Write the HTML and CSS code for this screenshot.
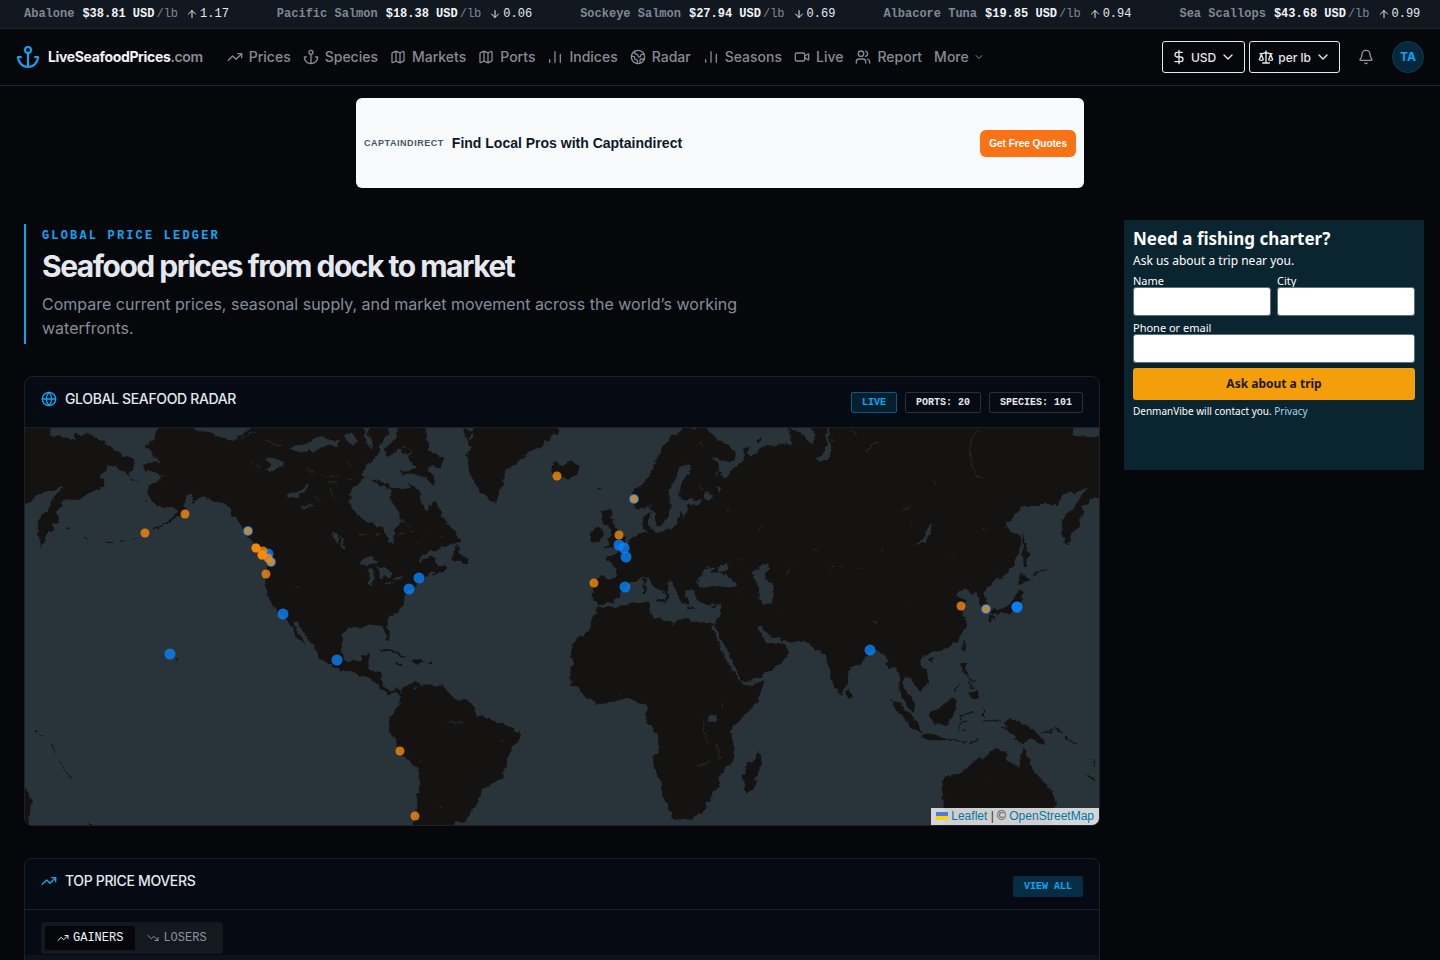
FILE: index.html
```html
<!DOCTYPE html>
<html lang="en">
<head>
<meta charset="utf-8">
<meta name="viewport" content="width=device-width, initial-scale=1">
<title>LiveSeafoodPrices.com</title>
<link rel="stylesheet" href="styles.css">
</head>
<body>
<svg class="sprite" aria-hidden="true">
  <symbol id="i-up" viewBox="0 0 24 24"><path d="m5 12 7-7 7 7M12 19V5"/></symbol>
  <symbol id="i-down" viewBox="0 0 24 24"><path d="M12 5v14M19 12l-7 7-7-7"/></symbol>
  <symbol id="i-anchor" viewBox="0 0 24 24"><path d="M12 22V8M5 12H2a10 10 0 0 0 20 0h-3"/><circle cx="12" cy="5" r="3"/></symbol>
  <symbol id="i-trend" viewBox="0 0 24 24"><path d="m22 7-8.500 8.500-5-5L2 17"/><path d="M16 7h6v6"/></symbol>
  <symbol id="i-trend-down" viewBox="0 0 24 24"><path d="m22 17-8.500-8.500-5 5L2 7"/><path d="M16 17h6v-6"/></symbol>
  <symbol id="i-map" viewBox="0 0 24 24"><path d="M14.106 5.553a2 2 0 0 0 1.788 0l3.659-1.830A1 1 0 0 1 21 4.619v12.764a1 1 0 0 1-.553.894l-4.553 2.277a2 2 0 0 1-1.788 0l-4.212-2.106a2 2 0 0 0-1.788 0l-3.659 1.830A1 1 0 0 1 3 19.381V6.618a1 1 0 0 1 .553-.894l4.553-2.277a2 2 0 0 1 1.788 0zM15 5.764v15M9 3.236v15"/></symbol>
  <symbol id="i-bars" viewBox="0 0 24 24"><path d="M12 20V4M20 20V8M4 20v-4"/></symbol>
  <symbol id="i-earth" viewBox="0 0 24 24"><path d="M21.540 15H17a2 2 0 0 0-2 2v4.540M7 3.340V5a3 3 0 0 0 3 3 2 2 0 0 1 2 2c0 1.100.9 2 2 2a2 2 0 0 0 2-2c0-1.100.9-2 2-2h3.170M11 21.950V18a2 2 0 0 0-2-2 2 2 0 0 1-2-2v-1a2 2 0 0 0-2-2H2.050"/><circle cx="12" cy="12" r="10"/></symbol>
  <symbol id="i-video" viewBox="0 0 24 24"><path d="m16 13 5.223 3.482a.5.5 0 0 0 .777-.416V7.870a.5.5 0 0 0-.752-.432L16 10.500"/><rect x="2" y="6" width="14" height="12" rx="2"/></symbol>
  <symbol id="i-users" viewBox="0 0 24 24"><path d="M16 21v-2a4 4 0 0 0-4-4H6a4 4 0 0 0-4 4v2"/><circle cx="9" cy="7" r="4"/><path d="M22 21v-2a4 4 0 0 0-3-3.870M16 3.130a4 4 0 0 1 0 7.750"/></symbol>
  <symbol id="i-chevron" viewBox="0 0 24 24"><path d="m6 9 6 6 6-6"/></symbol>
  <symbol id="i-dollar" viewBox="0 0 24 24"><path d="M12 2v20M17 5H9.500a3.500 3.500 0 0 0 0 7h5a3.500 3.500 0 0 1 0 7H6"/></symbol>
  <symbol id="i-scale" viewBox="0 0 24 24"><path d="m16 16 3-8 3 8c-.87.65-1.920 1-3 1s-2.130-.35-3-1ZM2 16l3-8 3 8c-.87.65-1.920 1-3 1s-2.130-.35-3-1ZM7 21h10M12 3v18M3 7h2c2 0 5-1 7-2 2 1 5 2 7 2h2"/></symbol>
  <symbol id="i-bell" viewBox="0 0 24 24"><path d="M10.268 21a2 2 0 0 0 3.464 0M3.262 15.326A1 1 0 0 0 4 17h16a1 1 0 0 0 .740-1.673C19.410 13.956 18 12.499 18 8A6 6 0 0 0 6 8c0 4.499-1.411 5.956-2.738 7.326"/></symbol>
  <symbol id="i-globe" viewBox="0 0 24 24"><circle cx="12" cy="12" r="10"/><path d="M12 2a14.500 14.500 0 0 0 0 20 14.500 14.500 0 0 0 0-20M2 12h20"/></symbol>
</svg>

<div class="ticker">
  <div class="tick"><span class="tick-name">Abalone</span><span class="tick-price"><b>$38.81 USD</b><span>/lb</span></span><span class="tick-change"><svg class="icon s12"><use href="#i-up"/></svg>1.17</span></div>
  <div class="tick"><span class="tick-name">Pacific Salmon</span><span class="tick-price"><b>$18.38 USD</b><span>/lb</span></span><span class="tick-change"><svg class="icon s12"><use href="#i-down"/></svg>0.06</span></div>
  <div class="tick"><span class="tick-name">Sockeye Salmon</span><span class="tick-price"><b>$27.94 USD</b><span>/lb</span></span><span class="tick-change"><svg class="icon s12"><use href="#i-down"/></svg>0.69</span></div>
  <div class="tick"><span class="tick-name">Albacore Tuna</span><span class="tick-price"><b>$19.85 USD</b><span>/lb</span></span><span class="tick-change"><svg class="icon s12"><use href="#i-up"/></svg>0.94</span></div>
  <div class="tick"><span class="tick-name">Sea Scallops</span><span class="tick-price"><b>$43.68 USD</b><span>/lb</span></span><span class="tick-change"><svg class="icon s12"><use href="#i-up"/></svg>0.99</span></div>
</div>

<header class="topbar">
  <a class="brand" href="#"><svg class="icon s24 accent"><use href="#i-anchor"/></svg><span>LiveSeafoodPrices<span class="brand-tld">.com</span></span></a>
  <nav class="nav">
    <a href="#"><svg class="icon s16"><use href="#i-trend"/></svg>Prices</a>
    <a href="#"><svg class="icon s16"><use href="#i-anchor"/></svg>Species</a>
    <a href="#"><svg class="icon s16"><use href="#i-map"/></svg>Markets</a>
    <a href="#"><svg class="icon s16"><use href="#i-map"/></svg>Ports</a>
    <a href="#"><svg class="icon s16"><use href="#i-bars"/></svg>Indices</a>
    <a href="#"><svg class="icon s16"><use href="#i-earth"/></svg>Radar</a>
    <a href="#"><svg class="icon s16"><use href="#i-bars"/></svg>Seasons</a>
    <a href="#"><svg class="icon s16"><use href="#i-video"/></svg>Live</a>
    <a href="#"><svg class="icon s16"><use href="#i-users"/></svg>Report</a>
    <button type="button" class="nav-more">More<svg class="icon s12"><use href="#i-chevron"/></svg></button>
  </nav>
  <div class="tools">
    <label class="picker"><svg class="icon s16"><use href="#i-dollar"/></svg><select aria-label="Currency"><option>USD</option></select><svg class="icon s16"><use href="#i-chevron"/></svg></label>
    <label class="picker"><svg class="icon s16"><use href="#i-scale"/></svg><select aria-label="Unit"><option>per lb</option></select><svg class="icon s16"><use href="#i-chevron"/></svg></label>
    <button type="button" class="bell" aria-label="Notifications"><svg class="icon s16"><use href="#i-bell"/></svg></button>
    <button type="button" class="avatar">TA</button>
  </div>
</header>

<div class="banner-wrap">
  <section class="banner">
    <span class="banner-brand">CAPTAINDIRECT</span>
    <strong class="banner-title">Find Local Pros with Captaindirect</strong>
    <button type="button" class="banner-cta">Get Free Quotes</button>
  </section>
</div>

<div class="layout">
  <main class="content">
    <section class="hero">
      <p class="eyebrow">GLOBAL PRICE LEDGER</p>
      <h1>Seafood prices from dock to market</h1>
      <p class="lead">Compare current prices, seasonal supply, and market movement across the world’s working waterfronts.</p>
    </section>

    <section class="card">
      <div class="card-head radar-head">
        <h2><svg class="icon s16 accent"><use href="#i-globe"/></svg>GLOBAL SEAFOOD RADAR</h2>
        <div class="badges"><span class="badge live">LIVE</span><span class="badge">PORTS: 20</span><span class="badge">SPECIES: 101</span></div>
      </div>
      <div class="map">
        <svg class="map-svg" viewBox="25 428 1074 397" preserveAspectRatio="xMidYMid slice" role="img" aria-label="World map of ports">
          <defs><filter id="coast" x="0" y="0" width="1" height="1" color-interpolation-filters="sRGB"><feTurbulence type="fractalNoise" baseFrequency="0.16" numOctaves="3" seed="4" result="n"/><feDisplacementMap in="SourceGraphic" in2="n" scale="6" xChannelSelector="R" yChannelSelector="G"/></filter></defs>
          <g filter="url(#coast)">
            <rect class="sea" x="0" y="400" width="1130" height="450"/>
            <g transform="translate(20 425) scale(.33333)">
              <path class="land" d="M-30-30H92L90 32 120 36 165 42 162 28 180 26 215 30 255 55 300 85 310 95 330 98 345 112 340 130 325 150 300 135 275 118 262 118 262 140 250 145 238 150 258 180 235 190 205 205 180 222 165 225 140 222 120 232 130 240 118 250 108 265 115 285 100 300 102 315 85 320 80 335 72 350 65 364 58 340 52 315 55 290 65 272 85 255 95 235 110 205 128 190 130 182 115 188 100 198 80 198 60 205 50 215 35 235 12 240-30 245Z"/>
              <path class="land" d="M420 9 405 25 400 45 380 60 390 75 400 95 415 95 425 110 405 108 385 115 368 125 380 138 405 145 425 150 422 165 400 175 385 185 382 205 390 222 398 232 415 245 435 248 450 245 470 248 475 258 462 270 445 285 430 297 412 305 395 312 398 318 420 308 440 296 460 284 480 268 495 255 490 245 500 215 515 208 520 222 505 238 530 225 545 212 560 222 590 230 610 235 630 255 645 275 660 295 675 320 690 345 705 360 725 370 745 395 742 420 738 450 735 480 742 510 755 535 775 560 795 580 810 600 825 625 840 645 860 670 850 650 835 625 822 600 820 590 830 592 850 620 870 650 890 675 895 695 915 710 940 722 966 735V-30H430Z"/>
              <path class="sea" d="M500-30 525 14 570 22 600 35 640 52 655 35 690 12 705-30ZM805 68 840 62 870 52 890 38 905 33 930 45 975 50 985 62 960 72 930 62 900 68 880 80 850 76 820 78ZM735 102 760 95 795 110 785 122 760 138 740 135 754 118ZM800 208 830 200 850 185 872 178 860 194 835 212 805 216ZM838 250 870 238 882 242 850 254ZM935 322 950 325 962 345 972 370 962 374 948 350Z"/>
              <path class="land" d="M330 162 345 164 355 170 340 168ZM370 226 382 224 380 231ZM466 698 476 702 470 708Z"/>
              <path class="streams" d="M655 48 690 22 705 25M735 40 760 58 785 62M860 130 880 138 875 150M925 170 965 172 960 200M930 190 940 215 950 225M905 152 990 156M880 210 900 230M980 60 1000 80M1000 15 1050 60M1020 40 1060 70M940 45 955 60M690 110 720 130M830 485 842 488M945 345 935 330"/>
              <path class="isles" d="M285 352 260 352M315 347 300 350M340 343 350 340M190 340 205 345M140 305 146 312M645 270 668 300 685 335"/>
            </g>
            <g transform="translate(340 425) scale(.33333)">
              <path class="land" d="M-6-30H245L262 50 265 75 312 100 300 130 278 120 262 130 285 160 280 180 250 158 215 145 175 150 170 165 205 172 240 195 245 240 262 255 285 225 295 245 305 270 320 295 340 310 355 330 360 350 345 355 320 362 290 375 265 378 245 400 235 415 252 405 275 392 287 395 285 410 295 422 322 425 320 435 300 440 275 455 285 440 268 440 255 455 245 470 225 485 205 500 190 515 188 545 165 570 145 585 142 605 150 630 152 648 142 645 132 620 125 602 100 600 75 602 65 612 45 605 20 612 6 630 4 665 12 700 25 712 48 710 60 705 65 690 92 685 92 695 82 715 85 735 118 738 125 745 125 782 95 765 60 750 30 738-6 735Z"/>
              <path class="sea" d="M30 200 60 168 80 155 100 170 120 180 150 190 150 220 165 240 180 270 178 300 165 310 160 335 162 360 148 350 138 330 130 305 100 298 70 285 45 260 28 235ZM175 10 155-20 140 30 125 55 110 90 90 110 60 150 85 160 130 172 160 192 215 190 190 160 180 137 215 135 228 125 200 98 218 78 195 60 175 70 160 90 140 95 130 75 150 60 165 40ZM65-10 88-10 82 30 98 50 92 80 80 50ZM10 28 40 30 55 50 35 60 20 45ZM55 415 75 400 100 395 115 410 115 422 90 415 70 422ZM88 430 100 430 102 455 98 480 88 478ZM110 425 140 430 155 445 150 460 135 450 125 460 115 450 120 435ZM128 478 150 470 162 470 135 484ZM158 462 185 455 183 463 165 468ZM0 325 8 345 14 372 6 370Z"/>
              <path class="land" d="M180 66 200 64 215 82 200 90 182 84ZM122 174 132 178 128 186 120 182ZM370 14 395 16 400 35 385 44 372 34ZM395-30 400 15 385 45 384 60 395 70 380 90 385 120 392 150 405 175 420 200 440 215 465 232 474 210 485 180 490 160 500 130 520 120 545 100 570 80 600 65 625 45 655 18 640-30ZM632 130 640 118 636 110 650 108 655 122 675 115 685 108 700 112 718 125 715 145 700 155 680 168 665 155 640 148ZM350 360 345 375 335 400 335 408 360 410 385 415 382 400 365 390 350 385 358 365ZM780 260 800 248 820 258 808 275 820 285 822 305 845 325 862 335 858 352 830 362 790 372 805 360 800 345 815 335 810 310 795 300 790 285ZM755 320 775 305 790 312 785 345 765 355 750 350ZM772 188 780 190 778 196ZM755 466 780 456 830 462 828 435 820 420 798 405 800 396 830 400 850 390 870 360 900 330 935 320 985 316V500L945 490 930 465 915 450 895 468 870 470 840 500 835 510 820 530 785 538 760 530 758 490ZM790 547 850 545 900 535 930 533 930 548 928 565 940 578 990 590V784H695L692 740 700 720 692 690 700 655 720 635 745 620 755 600 755 575 780 560ZM909 462 917 455 917 474 910 476ZM908 484 920 482 918 506 910 506Z"/>
              <path class="streams" d="M175 330 195 322M205 325 225 320M200 300 215 305M230 355 240 350M255 322 262 330M300 335 310 340M100 335 120 325M60 330 80 328M180 285 195 290M20 110 40 130M15 160 45 165"/>
            </g>
            <g transform="translate(600 425) scale(.33333)">
              <path class="land" d="M-12 458 48 460 50 430 30 410 20 400 50 385 65 365 85 355 95 340 115 328 140 322 128 300 128 280 142 268 152 262 148 240 130 250 115 258 100 240 92 225 105 195 130 175 155 140 170 100 185 65 215 30 260 10 320 12 350 45 385 60 408 85 405 105 385 112 350 100 335 95 355 115 358 140 375 158 388 145 400 125 425 110 435 90 430 65 445 65 450 95 470 80 490 65 530 60 560 55 578 60 570 40 560 8 600 20 640 65 645 40 625-30H790V712L742 735V784H705L690 745 680 690 670 690 650 670 635 652 545 648 540 635 520 640 500 630 485 602 470 605 490 640 500 655 525 658 535 650 568 680 550 710 480 755 430 775 405 725 345 605 350 590 360 560 362 538 345 540 310 535 290 525 285 500 275 490 250 495 262 515 268 542 248 535 235 515 225 490 215 475 190 455 175 432 162 440 165 455 185 480 205 505 208 518 195 530 200 512 185 500 160 480 148 460 130 455 110 468 90 475 60 500 58 512 40 530-12 538Z"/>
              <path class="land" d="M-10 547 60 545 100 535 140 533 150 545 148 565 165 580 200 585 220 600 235 585 260 580 290 590 325 595 350 590 338 605 345 640 365 680 385 720 410 760 422 784H-10ZM165 525 195 522 190 535 178 532ZM262 546 282 550 278 554 262 551ZM335 548 350 542 348 550 338 554ZM128 462 137 455 137 474 130 476ZM128 484 140 482 138 506 130 506ZM470 42 482 38 484 48 472 52Z"/>
              <path class="sea" d="M240 125 262 118 272 130 262 150 245 175 238 205 245 225 275 225 308 223 300 237 262 240 264 260 250 275 240 255 235 290 215 312 190 318 165 322 150 312 142 290 155 262 150 240 165 268 165 290 172 302 190 298 205 270 212 240 205 215 208 190 225 165ZM315 202 330 202 336 218 325 228 315 220ZM352 180 362 185 362 208 352 200ZM378 248 388 255 384 262ZM295 470 310 440 325 422 340 430 335 440 355 440 385 455 410 475 405 488 370 485 340 480 310 490 295 485ZM352 432 370 422 392 416 382 432 365 440ZM460 440 480 425 505 418 508 435 490 445 505 470 522 490 515 535 495 538 475 520 480 500 468 475ZM678-20 692-20 686 20 688 45 695 70 685 98 665 110 643 100 665 95 678 75 680 45Z"/>
              <path class="streams" d="M695 45 712 45 720 65 718 80M470 320 480 305 490 300M555 450 565 430 578 425M690 438 695 425 730 422M750 425 765 435M705 470 722 472M640 375 648 372M415 405 428 402M420 515 424 518M530 555 538 558M300 50 305 70M295 180 310 195M350 130 348 160M330 675 342 668"/>
            </g>
            <g transform="translate(340 640) scale(.33333)">
              <path class="land" d="M-6 90 20 88 45 92 70 105 95 118 105 130 120 145 145 163 165 157 178 167 186 156 175 147 155 150 140 150 125 135 122 115 125 95 118 92 85 92 82 70 92 42 68 45 60 60 25 68-6 60ZM178 165 190 140 215 128 225 124 240 135 280 138 315 140 325 155 345 178 380 180 400 195 410 225 440 235 480 250 515 262 540 280 535 305 510 335 500 370 490 410 460 430 425 450 418 480 395 515 375 545 340 542 350 580H215L228 530 232 480 240 420 235 385 200 360 180 340 165 300 145 268 150 235 175 200 180 180Z"/>
              <path class="land" d="M115 35 135 25 165 32 198 50 180 50 150 35ZM212 60 230 54 254 66 230 74ZM168 69H186V73H168ZM262 67H276V72H262ZM712-6 692 40 700 65 692 100 697 125 720 150 735 170 770 190 820 185 850 175 880 178 890 190 915 190 920 205 915 235 935 265 955 295 955 325 940 350 940 380 960 420 968 465 985 500 1000 540 1060 535 1085 515 1110 480 1118 455 1140 440 1138 405 1150 390 1180 370 1182 345 1180 310 1170 275 1190 250 1225 215 1255 180 1274 122 1240 132 1210 138 1205 130 1185 100 1165 70 1145 30 1130-6ZM1150-6 1170 30 1190 70 1210 118 1240 110 1290 90 1330 65 1348 35 1330 15 1312 5 1300 15 1280 10 1272-6ZM1350-6 1405 5 1430 30 1458 38 1460 70 1480 130 1502 166 1520 130V-6ZM1258 333 1268 360 1258 385 1240 450 1215 454 1208 415 1218 370 1240 362Z"/>
              <path class="sea" d="M1108 226 1130 223 1126 245 1108 250ZM224 140 230 140 230 150 224 148Z"/>
              <path class="streams" d="M1088 240 1090 278 1110 308M1130 310 1140 358M1072 378 1110 365M1146 190 1150 205M835 155 840 165M240 362 248 366M298 500 306 502M325 245 365 250M480 305 490 302"/>
            </g>
            <g transform="translate(840 380) scale(.33333)">
              <path class="land" d="M-10 100H702V168L730 170 770 172 820 165V340L778 352 750 355 745 370 725 380 730 400 718 420 720 440 700 455 690 480 678 498 668 470 665 425 675 405 700 385 725 345 742 320 730 325 705 345 690 335 665 350 655 378 630 370 600 378 550 378 530 400 495 440 510 455 535 462 545 480 535 520 510 570 475 600 460 605 430 635 440 660 452 685 440 692 425 690 420 665 410 640 395 640 375 628 345 650 365 655 380 660 365 690 375 715 378 740 360 775 335 800 300 812 270 820 245 830 240 850 265 880 268 905 240 932 230 925 215 900 195 890 190 915 205 945 222 965 222 997 205 985 190 955 178 925 180 900 175 880 165 860 148 868 140 840 120 815 105 810 85 825 60 840 22 870 20 910-2 940-20 900Z"/>
              <path class="land" d="M548 455 555 490 568 525 560 540 565 555 552 560 548 520ZM545 575 560 590 575 598 555 608 535 612ZM535 625 548 635 545 660 530 690 505 700 475 700 450 700 460 690 495 685 520 660 530 640ZM450 703 463 710 456 727 448 720ZM370 788 378 784 371 812 363 806ZM264 838 283 831 276 849ZM22 925 36 945 25 957 17 945ZM150 960 175 968 205 1000 235 1030 242 1056 215 1045 190 1015 165 985ZM240 1060 280 1066 322 1076 318 1084 270 1080 245 1073ZM270 995 295 985 320 965 340 948 350 965 345 990 325 1030 320 1040 285 1030 272 1015ZM363 850 380 848 376 872 388 888 370 886ZM384 940 410 933 416 955 395 956ZM480 1035 500 1045 495 1024 515 1018 570 1040 595 1060 622 1098 600 1092 575 1075 550 1090 520 1080 530 1070 510 1050 490 1047ZM320 1400 308 1235 305 1205 330 1185 360 1178 385 1160 400 1145 420 1130 435 1135 450 1110 475 1108 500 1115 500 1135 520 1155 538 1160 545 1120 552 1098 565 1140 585 1175 610 1205 635 1235 648 1270 640 1310 620 1400ZM736 1185 752 1190 764 1204 750 1198Z"/>
              <path class="isles" d="M362 1005 400 998M362 1012 360 1050M365 1030 382 1022M368 1045 378 1052M322 1080 360 1082M368 1086 385 1082M392 1092 418 1076M430 985V1010M430 1022H470M450 1018 480 1024M340 938 362 910M380 892 405 905M388 905 398 920M390 918 405 925M605 1058 630 1056 638 1044M645 1045 665 1060M675 1070 712 1095M760 1140 768 1160M580 585 618 568M470 705 480 698"/>
              <path class="sea" d="M225 492 250 478 268 435 275 432 272 455 255 485 235 495Z"/>
              <path class="streams" d="M415 150 395 175 388 210 392 250 405 280 430 298M280 300 295 315M185 390 212 385M425 452 440 450M465 575 468 580M125 510 130 512M0 560 10 558M50 568 65 565M190 668 195 672M95 720 112 732M80 215 95 195 115 185M35 150 50 165M435 1205 440 1206M335 525 340 530M208 428 212 440"/>
            </g>
            <path class="land" d="M827 645 835 683 839 695 845 684 847 670 865 655 862 640ZM20 785 27 788 32 802 29 812 28 824 20 830Z"/>
            <path class="dots" d="M36 731 42 737M50 744 56 752M60 762 72 780M102 766 104 768M88 821 92 825M776 777 777 778"/>
          </g>
          <g class="ports-blue">
            <circle cx="268" cy="554" r="5.500"/><circle cx="283" cy="614" r="5.500"/><circle cx="170" cy="654" r="5.500"/><circle cx="337" cy="660" r="5.500"/><circle cx="419" cy="578" r="5.500"/><circle cx="409" cy="589" r="5.500"/><circle cx="248" cy="531" r="5"/><circle cx="271" cy="562" r="5"/><circle cx="634" cy="499" r="5"/><circle cx="619" cy="545" r="5.500"/><circle cx="624" cy="548" r="5.500"/><circle cx="626" cy="557" r="5.500"/><circle cx="625" cy="587" r="5.500"/><circle cx="870" cy="650" r="5.500"/><circle cx="986" cy="609" r="5"/><circle cx="1017" cy="607" r="5.500"/><circle cx="1017" cy="607" r="5.500"/>
          </g>
          <g class="ports-orange">
            <circle cx="145" cy="533" r="4.500"/><circle cx="185" cy="514" r="4.500"/><circle cx="256" cy="548" r="4.500"/><circle cx="256" cy="548" r="4.500"/><circle cx="263" cy="551" r="4.500"/><circle cx="262" cy="555" r="4.500"/><circle cx="262" cy="555" r="4.500"/><circle cx="268" cy="558" r="4.500"/><circle cx="266" cy="574" r="4.500"/><circle cx="557" cy="476" r="4.500"/><circle cx="619" cy="535" r="4.500"/><circle cx="594" cy="583" r="4.500"/><circle cx="400" cy="751" r="4.500"/><circle cx="415" cy="816" r="4.500"/><circle cx="961" cy="606" r="4.500"/>
          </g>
          <g class="ports-both"><circle cx="248" cy="531" r="4"/><circle cx="271" cy="562" r="4"/><circle cx="634" cy="499" r="4"/><circle cx="986" cy="609" r="4"/></g>
        </svg>
        <div class="attribution"><a href="#"><svg class="flag" viewBox="0 0 12 8" aria-hidden="true"><path fill="#4c7be1" d="M0 0h12v4H0z"/><path fill="#ffd500" d="M0 4h12v4H0z"/></svg> Leaflet</a> | © <a href="#">OpenStreetMap</a></div>
      </div>
    </section>

    <section class="card">
      <div class="card-head">
        <h2><svg class="icon s16 accent"><use href="#i-trend"/></svg>TOP PRICE MOVERS</h2>
        <a class="view-all" href="#">VIEW ALL</a>
      </div>
      <div class="tabs-row">
        <div class="tabs" role="tablist">
          <button type="button" role="tab" aria-selected="true" class="tab active"><svg class="icon s12"><use href="#i-trend"/></svg>GAINERS</button>
          <button type="button" role="tab" aria-selected="false" class="tab"><svg class="icon s12"><use href="#i-trend-down"/></svg>LOSERS</button>
        </div>
      </div>
      <div class="movers-head"></div>
    </section>
  </main>

  <aside class="charter">
    <h2>Need a fishing charter?</h2>
    <p class="charter-sub">Ask us about a trip near you.</p>
    <form class="charter-form">
      <label>Name<input type="text" name="name"></label>
      <label>City<input type="text" name="city"></label>
      <label class="wide">Phone or email<input type="text" name="contact"></label>
      <button type="button" class="wide">Ask about a trip</button>
    </form>
    <p class="charter-note">DenmanVibe will contact you. <a href="#">Privacy</a></p>
  </aside>
</div>
</body>
</html>
```

FILE: styles.css
```css
:root {
  --bg: #05070b;
  --card: #060a12;
  --line: #1b212b;
  --text: #e5e8ee;
  --muted: #868c9a;
  --accent: #0ea5f5;
  --sans: Inter, "Liberation Sans", sans-serif;
  --mono: "Liberation Mono", monospace;
}
* { box-sizing: border-box; }
body {
  margin: 0;
  height: 100vh;
  overflow: hidden;
  background: var(--bg);
  color: var(--text);
  font-family: var(--sans);
}
h1, h2, p { margin: 0; }
a { color: inherit; text-decoration: none; }
button, select, input { font: inherit; color: inherit; }
button { border: 0; background: none; padding: 0; cursor: pointer; }
.sprite { display: none; }
.icon {
  flex: none;
  fill: none;
  stroke: currentColor;
  stroke-width: 2;
  stroke-linecap: round;
  stroke-linejoin: round;
}
.s12 { width: 12px; height: 12px; }
.s16 { width: 16px; height: 16px; }
.s24 { width: 24px; height: 24px; }
.accent { color: var(--accent); }

.ticker {
  display: flex;
  gap: 48px;
  height: 29px;
  align-items: center;
  padding-left: 24px;
  overflow: hidden;
  background: #111820;
  border-bottom: 1px solid #202630;
  font: 12px/18px var(--mono);
  white-space: nowrap;
}
.tick { display: flex; gap: 8px; flex: none; }
.tick-name { color: #7f8793; font-weight: 700; }
.tick-price { display: flex; gap: 2px; }
.tick-price b { color: #f1f3f6; }
.tick-price span { color: #7f8793; }
.tick-change { display: flex; align-items: center; gap: 2px; }

.topbar {
  display: flex;
  align-items: center;
  height: 57px;
  padding: 0 16px;
  border-bottom: 1px solid #202630;
}
.brand {
  display: flex;
  align-items: center;
  gap: 8px;
  font-size: 14px;
  line-height: 20px;
  font-weight: 700;
  letter-spacing: -0.025em;
  color: #f1f3f6;
}
.brand-tld { color: #858d9b; font-weight: 600; }
.nav {
  display: flex;
  align-items: center;
  gap: 12px;
  margin-left: 24px;
  color: #858b96;
  font-size: 14px;
  line-height: 20px;
  font-weight: 500;
}
.nav a { display: flex; align-items: center; gap: 6px; }
.nav-more { display: flex; align-items: center; gap: 4px; }
.tools { display: flex; align-items: center; margin-left: auto; }
.picker {
  display: flex;
  align-items: center;
  gap: 4px;
  height: 32px;
  margin-right: 4px;
  padding: 0 8px;
  border: 1px solid #e5e8ee;
  border-radius: 3px;
  font-size: 12px;
  font-weight: 500;
}
.picker select {
  appearance: none;
  field-sizing: content;
  border: 0;
  background: transparent;
  padding: 0;
}
.bell { display: grid; place-items: center; width: 32px; height: 32px; margin: 0 10px 0 6px; color: #9299a5; }
.avatar {
  width: 32px;
  height: 32px;
  border-radius: 50%;
  background: #06283b;
  border: 1px solid #0a3c58;
  color: var(--accent);
  font-size: 12px;
  line-height: 16px;
  font-weight: 700;
}

.banner-wrap { display: flex; justify-content: center; padding: 12px 16px; }
.banner {
  display: flex;
  align-items: center;
  gap: 8px;
  width: 728px;
  max-width: 100%;
  height: 90px;
  padding: 0 8px;
  border-radius: 6px;
  background: #f8fafc;
  font-family: "Liberation Sans", sans-serif;
}
.banner-brand { color: #475569; font-size: 9px; line-height: 12px; font-weight: 700; letter-spacing: 0.06em; }
.banner-title { color: #0f172a; font-size: 14px; line-height: 18px; }
.banner-cta {
  margin-left: auto;
  padding: 7px 9px;
  border-radius: 6px;
  background: #f97316;
  color: #fff;
  font-size: 10px;
  line-height: 13px;
  font-weight: 700;
}

.layout {
  display: grid;
  grid-template-columns: minmax(0, 1fr) 300px;
  align-items: start;
  gap: 24px;
  padding: 20px 16px 0 24px;
}
.content { display: grid; gap: 32px; padding-top: 4px; }
.hero { padding: 4px 0 4px 16px; border-left: 2px solid var(--accent); }
.eyebrow { color: var(--accent); font: 700 12px/16px var(--mono); letter-spacing: 0.18em; }
h1 { margin: 4px 0 8px; font-size: 30px; line-height: 36px; font-weight: 700; letter-spacing: -0.05em; }
.lead { max-width: 720px; color: var(--muted); font-size: 16px; line-height: 24px; }

.card { border: 1px solid var(--line); border-radius: 8px; background: var(--card); overflow: hidden; }
.card-head {
  display: flex;
  justify-content: space-between;
  align-items: flex-start;
  height: 51px;
  padding: 12px 16px;
  border-bottom: 1px solid var(--line);
}
.card-head h2 {
  display: flex;
  align-items: center;
  gap: 8px;
  font-size: 14px;
  line-height: 20px;
  font-weight: 500;
  letter-spacing: -0.025em;
}
.badges { display: flex; gap: 8px; padding-top: 3px; font: 700 10px/15px var(--mono); }
.badge { padding: 2px 10px; border: 1px solid #29303a; border-radius: 2px; }
.live { color: var(--accent); background: #04202f; border-color: #075a85; }
.view-all {
  margin-top: 5px;
  padding: 3px 11px;
  border-radius: 2px;
  background: #062d42;
  color: var(--accent);
  font: 700 10px/15px var(--mono);
}

.map { position: relative; height: 397px; background: #28343a; }
.map-svg { display: block; width: 100%; height: 100%; }
.sea { fill: #28343a; }
.land { fill: #151311; }
.streams { fill: none; stroke: #28343a; stroke-width: 3; stroke-opacity: .75; }
.isles { fill: none; stroke: #151311; stroke-width: 4; }
.dots { fill: none; stroke: #151311; stroke-width: 1; }
.ports-blue circle { fill: #0a84ff; fill-opacity: .78; }
.ports-orange circle { fill: #ff8c0a; fill-opacity: .78; }
.ports-both circle { fill: #d89035; fill-opacity: .85; }
.attribution {
  position: absolute;
  right: 0;
  bottom: 0;
  padding: 0 5px;
  background: rgba(255, 255, 255, .8);
  color: #333;
  font: 12px/17px "Liberation Sans", sans-serif;
}
.attribution a { color: #0078a8; }
.flag { width: 12px; height: 8px; }

.tabs-row { padding: 12px 16px 0; }
.tabs { display: inline-flex; padding: 4px; border-radius: 4px; background: #141920; vertical-align: top; }
.tab {
  display: flex;
  align-items: center;
  gap: 4px;
  height: 24px;
  padding: 0 12px;
  border-radius: 2px;
  color: #8a92a0;
  font: 12px/18px var(--mono);
}
.active { background: #05070b; color: #f1f3f6; }
.tab .icon { stroke-width: 2; }
.movers-head { height: 40px; margin-top: 1px; background: #0e131b; }

.charter {
  min-height: 250px;
  padding: 8px 9px;
  background: #0a2430;
  color: #fff;
  font-family: "Noto Sans", sans-serif;
}
.charter h2 { font-size: 17px; line-height: 21px; font-weight: 700; }
.charter-sub { margin-top: 4px; font-size: 12px; line-height: 16px; }
.charter-form {
  display: grid;
  grid-template-columns: 1fr 1fr;
  gap: 5px 6px;
  margin-top: 5px;
  font-size: 11px;
  line-height: 13px;
}
.charter-form label { display: grid; min-width: 0; }
.charter-form input {
  width: 100%;
  min-width: 0;
  height: 29px;
  border: 1px solid #5d7480;
  border-radius: 3px;
  background: #fff;
  color: #111;
}
.charter-form .wide { grid-column: 1 / -1; }
.charter-form button {
  height: 32px;
  border-radius: 3px;
  background: #f59e0b;
  color: #1c1917;
  font-size: 12px;
  line-height: 16px;
  font-weight: 700;
}
.charter-note { margin-top: 4px; font-size: 10px; line-height: 14px; }
.charter-note a { color: #a5d8e6; }
```
